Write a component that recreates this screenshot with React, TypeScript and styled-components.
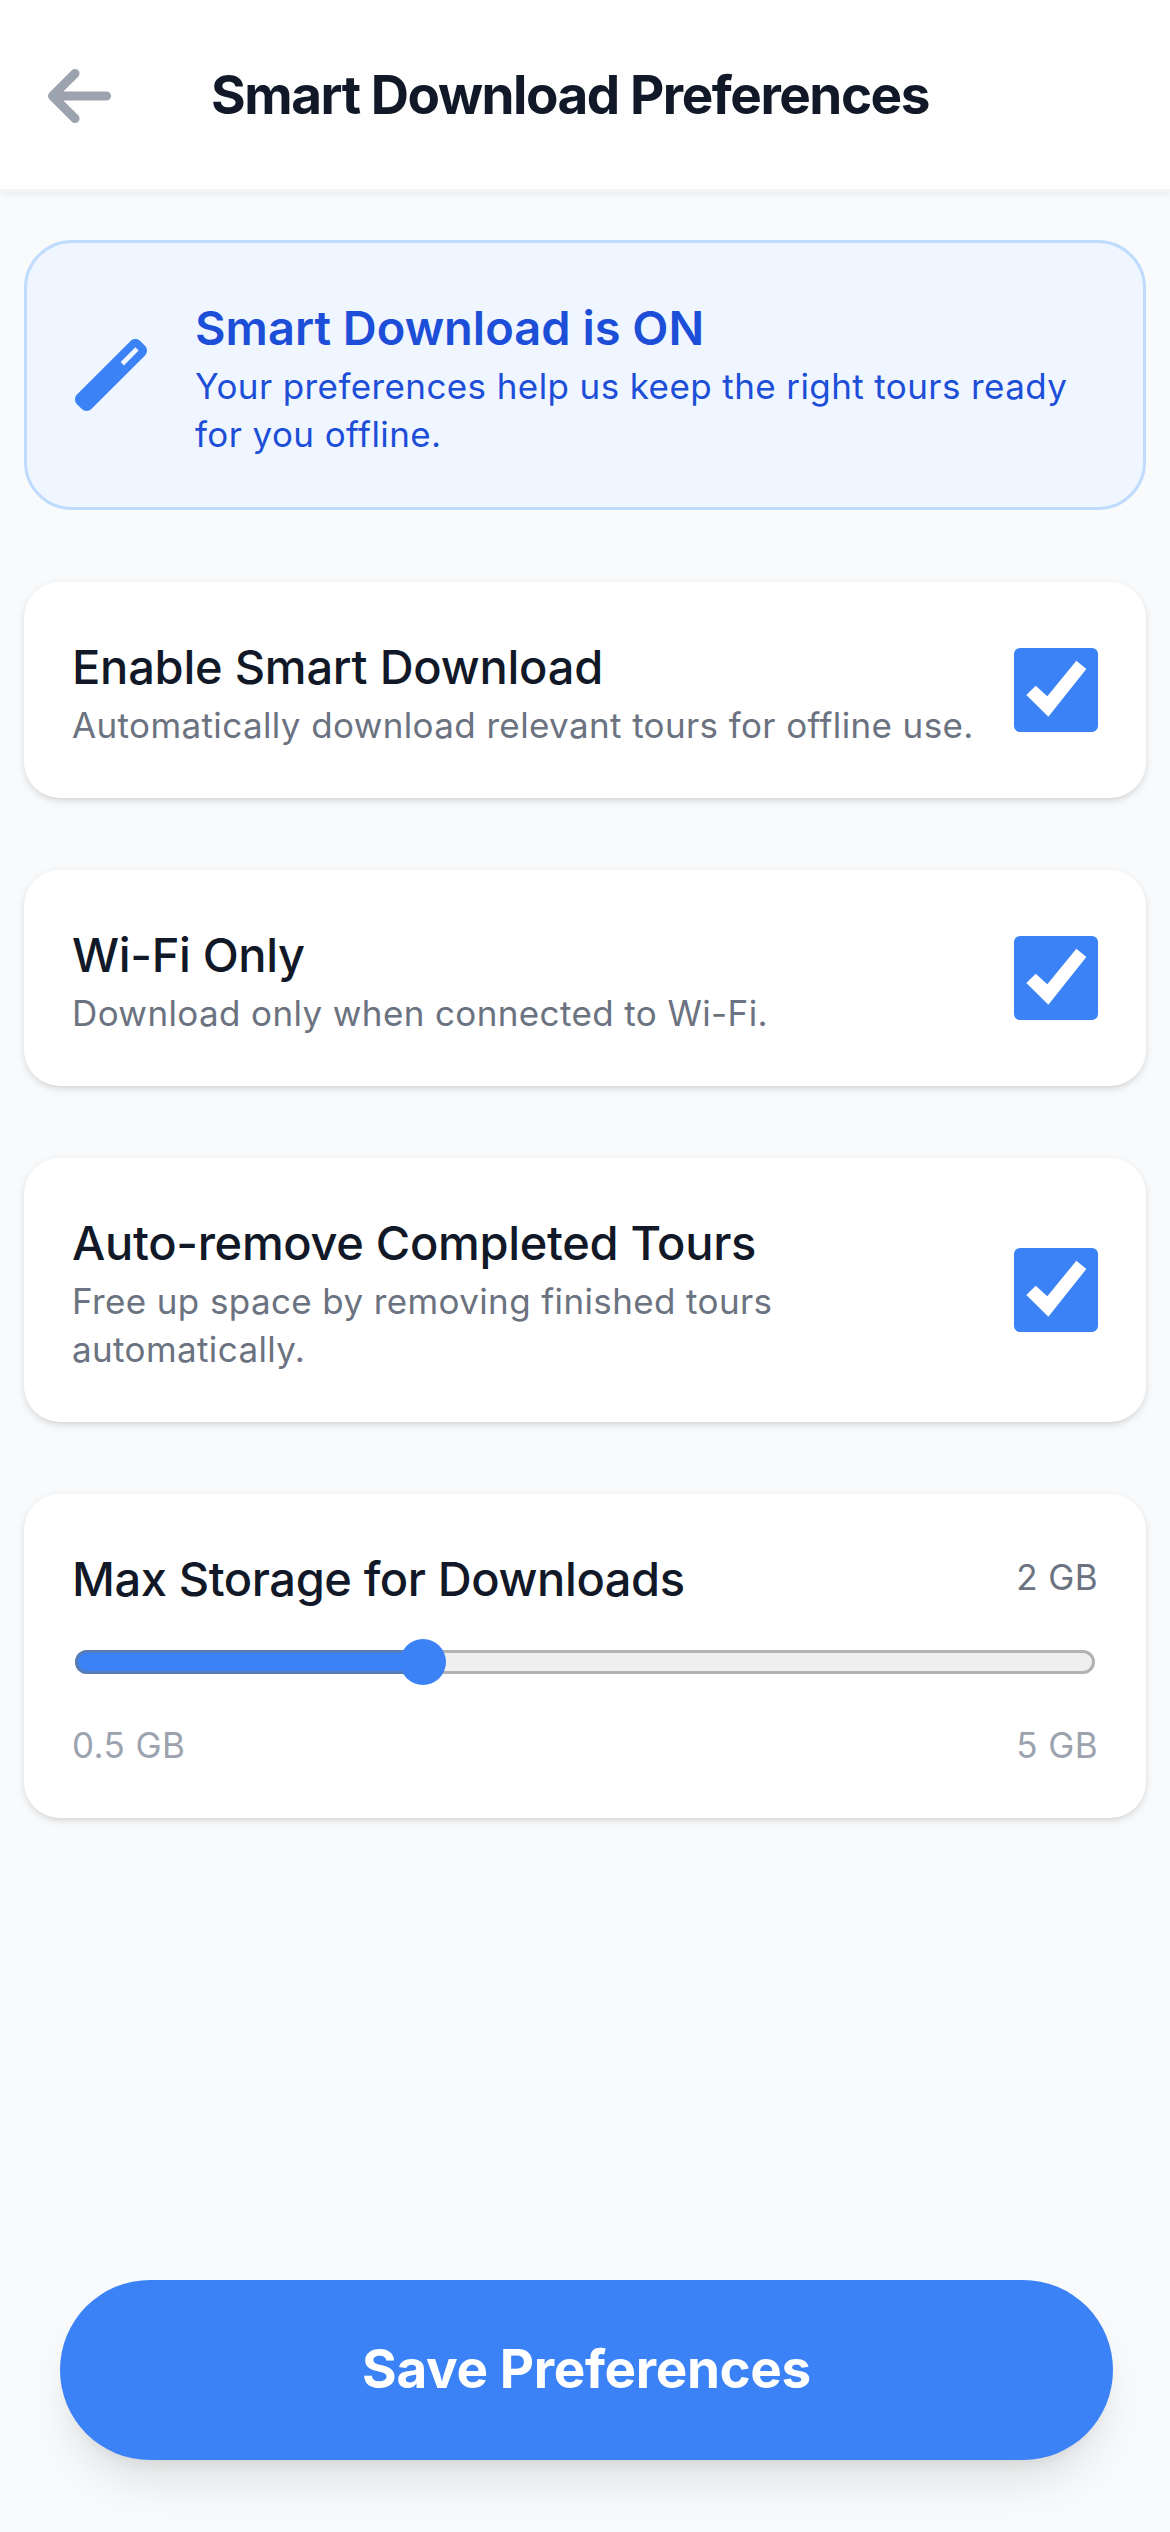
import React, { useState } from 'react';
import styled, { createGlobalStyle } from 'styled-components';
import { FaArrowLeft, FaWandMagic } from 'react-icons/fa6';

const GlobalStyle = createGlobalStyle`
  *, *::before, *::after { box-sizing: border-box; }
  body {
    margin: 0;
    background: #f9fafb;
    font-family: Inter, "Liberation Sans", sans-serif;
    -webkit-font-smoothing: antialiased;
  }
  h1, h2, p { margin: 0; }
  button { font: inherit; border: 0; cursor: pointer; }
`;

const Screen = styled.div`
  display: flex;
  flex-direction: column;
  width: 1170px;
  height: 2532px;
  overflow: hidden;
  background: #f9fafb;
`;

const Header = styled.header`
  display: flex;
  align-items: center;
  flex: none;
  height: 192px;
  padding: 3px 48px 0;
  background: #fefefe;
  border-bottom: 3px solid #f3f4f6;
  box-shadow: 0 3px 6px rgba(0, 0, 0, 0.05);
`;

const BackButton = styled.button`
  display: flex;
  width: 63px;
  padding: 0;
  background: none;
  color: #9ca3af;

  svg {
    flex: none;
    width: 63px;
    height: 72px;
  }
`;

const Title = styled.h1`
  flex: 1;
  padding: 0 93px 2px 0;
  text-align: center;
  white-space: nowrap;
  font-size: 53px;
  line-height: 84px;
  font-weight: 700;
  letter-spacing: -1.45px;
  color: #111827;
`;

const Content = styled.main`
  display: flex;
  flex-direction: column;
  flex: 1;
  gap: 72px;
  padding: 48px 24px 0;
`;

const Banner = styled.section`
  display: flex;
  align-items: center;
  gap: 48px;
  padding: 48px;
  border: 3px solid #bfdbfe;
  border-radius: 48px;
  background: #eff6ff;
  color: #1d4ed8;

  svg {
    flex: none;
    width: 72px;
    height: 72px;
    color: #3b82f6;
  }
`;

const BannerTitle = styled.h2`
  height: 72px;
  font-size: 47px;
  line-height: 74px;
  font-weight: 600;
  letter-spacing: 0;
`;

const BannerText = styled.p`
  margin: -1px 0 1px;
  font-size: 35px;
  line-height: 48px;
  letter-spacing: 0.4px;
  white-space: nowrap;
`;

const Card = styled.section`
  padding: 48px;
  border-radius: 36px;
  background: #fff;
  box-shadow: 0 3px 9px rgba(0, 0, 0, 0.1), 0 3px 6px -3px rgba(0, 0, 0, 0.1);
`;

const Row = styled.div`
  display: flex;
  align-items: center;
  justify-content: space-between;
`;

const Label = styled.h2<{ $spacing: number }>`
  height: 72px;
  font-size: 47px;
  line-height: 74px;
  font-weight: 500;
  letter-spacing: ${(p) => p.$spacing}px;
  white-space: nowrap;
  color: #111827;
`;

const Description = styled.p`
  margin: -1px 0 1px;
  font-size: 35px;
  line-height: 48px;
  letter-spacing: 0.38px;
  white-space: pre;
  color: #6b7280;
`;

const CheckButton = styled.button<{ $on: boolean }>`
  flex: none;
  display: flex;
  width: 84px;
  height: 84px;
  padding: 0;
  border-radius: 6px;
  background: ${(p) => (p.$on ? '#3b82f6' : '#fff')};
  box-shadow: ${(p) => (p.$on ? 'none' : 'inset 0 0 0 3px #767676')};
`;

const Amount = styled.span<{ $muted?: boolean }>`
  margin: -1px 0 1px;
  font-size: 35px;
  line-height: 48px;
  letter-spacing: 0.4px;
  color: ${(p) => (p.$muted ? '#9ca3af' : '#6b7280')};
`;

const Slider = styled.div`
  display: flex;
  align-items: center;
  position: relative;
  height: 48px;
  margin: 24px 3px 36px;
`;

const Track = styled.div`
  flex: 1;
  height: 24px;
  border: 3px solid #b2b2b2;
  border-radius: 12px;
  background: #efefef;
`;

const Fill = styled.div`
  position: absolute;
  left: 0;
  top: 12px;
  height: 24px;
  border: 3px solid #567bb8;
  border-right: 0;
  border-radius: 12px 0 0 12px;
  background: #3b82f6;
`;

const Thumb = styled.div`
  position: absolute;
  top: 1px;
  width: 46px;
  height: 46px;
  margin-left: -23px;
  border-radius: 50%;
  background: #3b82f6;
`;

const Footer = styled.footer`
  display: flex;
  flex: none;
  padding: 0 57px 72px 60px;
`;

const SaveButton = styled.button`
  flex: 1;
  height: 180px;
  padding: 0 0 2px;
  border-radius: 90px;
  background: #3b82f6;
  color: #fff;
  font-size: 53px;
  line-height: 84px;
  font-weight: 700;
  letter-spacing: -0.36px;
  box-shadow: 0 30px 45px -9px rgba(0, 0, 0, 0.1), 0 12px 18px -12px rgba(0, 0, 0, 0.1);
`;

interface Option {
  label: string;
  spacing: number;
  description: string;
}

const options: Option[] = [
  {
    label: 'Enable Smart Download',
    spacing: -0.23,
    description: 'Automatically download relevant tours for offline use.',
  },
  {
    label: 'Wi-Fi Only',
    spacing: -0.35,
    description: 'Download only when connected to Wi-Fi.',
  },
  {
    label: 'Auto-remove Completed Tours',
    spacing: -0.32,
    description: 'Free up space by removing finished tours\nautomatically.',
  },
];

const MIN = 0.5;
const MAX = 5;

function OptionCard({ option }: { option: Option }) {
  const [on, setOn] = useState(true);
  return (
    <Card>
      <Row>
        <div>
          <Label $spacing={option.spacing}>{option.label}</Label>
          <Description>{option.description}</Description>
        </div>
        <CheckButton
          $on={on}
          role="checkbox"
          aria-checked={on}
          aria-label={option.label}
          onClick={() => setOn(!on)}
        >
          {on && (
            <svg width="84" height="84" viewBox="0 0 252 252">
              <polygon points="37,141 65,113 100,145 187,38 217,63 103,206" fill="#fff" />
            </svg>
          )}
        </CheckButton>
      </Row>
    </Card>
  );
}

export default function App() {
  const storage = 2;
  const ratio = (storage - MIN) / (MAX - MIN);
  // The thumb stays inside the track, so its centre travels the track width less one thumb.
  const centre = `calc(${ratio * 100}% + ${(0.5 - ratio) * 48}px)`;

  return (
    <>
      <GlobalStyle />
      <Screen>
        <Header>
          <BackButton aria-label="Back">
            <FaArrowLeft />
          </BackButton>
          <Title>Smart Download Preferences</Title>
        </Header>
        <Content>
          <Banner>
            <FaWandMagic />
            <div>
              <BannerTitle>Smart Download is ON</BannerTitle>
              <BannerText>
                Your preferences help us keep the right tours ready
                <br />
                for you offline.
              </BannerText>
            </div>
          </Banner>
          {options.map((option) => (
            <OptionCard key={option.label} option={option} />
          ))}
          <Card>
            <Row>
              <Label $spacing={-0.4}>Max Storage for Downloads</Label>
              <Amount>{storage} GB</Amount>
            </Row>
            <Slider>
              <Track />
              <Fill style={{ width: centre }} />
              <Thumb style={{ left: centre }} />
            </Slider>
            <Row>
              <Amount $muted>{MIN} GB</Amount>
              <Amount $muted>{MAX} GB</Amount>
            </Row>
          </Card>
        </Content>
        <Footer>
          <SaveButton>Save Preferences</SaveButton>
        </Footer>
      </Screen>
    </>
  );
}
